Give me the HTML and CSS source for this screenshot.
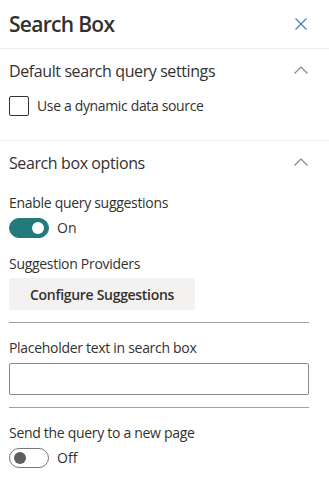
FILE: index.html
```html
<!DOCTYPE html>
<html lang="en">
<head>
  <meta charset="UTF-8">
  <title>Search Box</title>
  <meta name="viewport" content="width=device-width, initial-scale=1.0">
  <link rel="stylesheet" href="styles.css">
</head>
<body>

  <div class="panel">

    <!-- Panel header -->
    <header class="panel-header">
      <h1>Search Box</h1>
      <button class="close-btn" aria-label="Close">
        <svg width="12" height="12" viewBox="0 0 12 12">
          <path d="M0.5 0.5 L11.5 11.5 M11.5 0.5 L0.5 11.5" stroke="currentColor" stroke-width="1.1" fill="none"/>
        </svg>
      </button>
    </header>

    <!-- Default search query settings -->
    <section class="group first">
      <div class="group-head">
        <h2>Default search query settings</h2>
        <svg class="chevron" width="14" height="8" viewBox="0 0 14 8">
          <path d="M0.5 7.5 L7 1 L13.5 7.5" stroke="currentColor" stroke-width="1.1" fill="none"/>
        </svg>
      </div>
      <label class="checkbox">
        <span class="box"></span>
        Use a dynamic data source
      </label>
    </section>

    <!-- Search box options -->
    <section class="group">
      <div class="group-head">
        <h2>Search box options</h2>
        <svg class="chevron" width="14" height="8" viewBox="0 0 14 8">
          <path d="M0.5 7.5 L7 1 L13.5 7.5" stroke="currentColor" stroke-width="1.1" fill="none"/>
        </svg>
      </div>

      <div class="field-label label-first">Enable query suggestions</div>
      <div class="toggle on">
        <span class="track"><span class="thumb"></span></span>
        <span>On</span>
      </div>

      <div class="field-label label-providers">Suggestion Providers</div>
      <button class="default-btn">Configure Suggestions</button>

      <hr class="divider">

      <div class="field-label label-after-divider">Placeholder text in search box</div>
      <input class="text-input" type="text">

      <hr class="divider">

      <div class="field-label label-after-divider">Send the query to a new page</div>
      <div class="toggle">
        <span class="track"><span class="thumb"></span></span>
        <span>Off</span>
      </div>
    </section>

  </div>

</body>
</html>
```

FILE: styles.css
```css
/* Base styles */
body {
  margin: 0;
  background: #ffffff;
  color: #323130;
  font-family: "Segoe UI", "Open Sans", sans-serif;
  font-size: 14px;
}

.panel {
  width: 329px;
}

/* Header */
.panel-header {
  display: flex;
  align-items: center;
  justify-content: space-between;
  height: 48px;
  padding: 0 22px 0 9px;
  border-bottom: 1px solid #edebe9;
}

.panel-header h1 {
  margin: 0;
  font-size: 21px;
  font-weight: 600;
  line-height: 28px;
  letter-spacing: -0.7px;
}

.close-btn {
  display: flex;
  padding: 0;
  border: none;
  background: none;
  color: #3f7ab8;
  cursor: pointer;
}

/* Groups */
.group {
  padding: 11px 20px 24px 9px;
  border-bottom: 1px solid #edebe9;
}

.group + .group {
  padding-top: 11px;
  border-bottom: none;
}

.group-head {
  display: flex;
  align-items: center;
  justify-content: space-between;
  height: 22px;
}

.group-head h2 {
  margin: 0;
  font-size: 16px;
  font-weight: 400;
  line-height: 22px;
  letter-spacing: -0.4px;
}

.chevron {
  color: #8c8275;
  margin-top: -3px;
  margin-right: 1px;
}

/* Checkbox */
.checkbox {
  display: flex;
  align-items: center;
  gap: 8px;
  margin-top: 14px;
  line-height: 20px;
  letter-spacing: -0.35px;
}

.box {
  width: 18px;
  height: 18px;
  border: 1px solid #323130;
  border-radius: 2px;
}

/* Fields */
.field-label {
  line-height: 20px;
  letter-spacing: -0.3px;
}

.label-first {
  margin-top: 19px;
}

.label-providers {
  margin-top: 16px;
}

.label-after-divider {
  margin-top: 15px;
}

.toggle {
  display: flex;
  align-items: center;
  gap: 8px;
  margin-top: 5px;
  line-height: 20px;
}

.track {
  display: flex;
  align-items: center;
  box-sizing: border-box;
  width: 40px;
  height: 20px;
  padding: 0 4px;
  border: 1px solid #7a7876;
  border-radius: 10px;
}

.thumb {
  width: 12px;
  height: 12px;
  border-radius: 50%;
  background: #605e5c;
}

.toggle.on .track {
  justify-content: flex-end;
  background: #237a7b;
  border-color: #237a7b;
}

.toggle.on .thumb {
  background: #ffffff;
}

.default-btn {
  display: block;
  height: 32px;
  margin-top: 4px;
  padding: 0 21px;
  border: none;
  border-radius: 2px;
  background: #f3f2f1;
  color: #323130;
  font-family: inherit;
  font-size: 14px;
  font-weight: 600;
  letter-spacing: -0.3px;
}

.divider {
  margin: 12px 0 0;
  border: none;
  border-top: 1px solid #a19f9d;
}

.text-input {
  display: block;
  box-sizing: border-box;
  width: 100%;
  height: 32px;
  margin-top: 5px;
  border: 1px solid #8a8886;
  border-radius: 2px;
}
```
